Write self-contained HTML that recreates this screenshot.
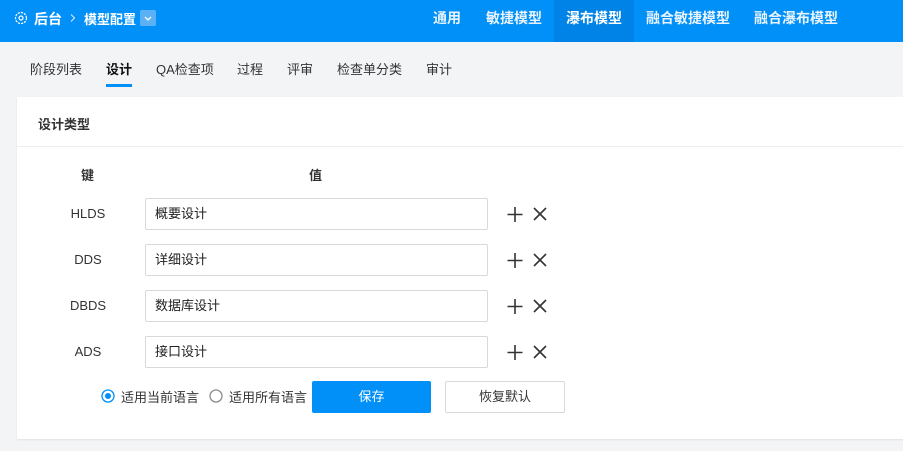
<!DOCTYPE html>
<html><head><meta charset="utf-8"><style>
*{margin:0;padding:0;box-sizing:border-box}
body{width:903px;height:451px;overflow:hidden;background:#f3f4f6;font-family:"Liberation Sans","Noto Sans CJK SC",sans-serif;font-size:13px;color:#333;position:relative}
.hdr{position:absolute;left:0;top:0;width:903px;height:42px;background:#0090f8;color:#fff}
.abs{position:absolute}
.tab{position:absolute;top:0;height:42px;line-height:36px;font-size:14px;font-weight:bold;color:#e8f3ff}
.sub{position:absolute;top:59px;font-size:13px;color:#333}
.card{position:absolute;left:17px;top:97px;width:900px;height:342px;background:#fff;box-shadow:0 1px 2px rgba(0,0,0,.08)}
.inp{position:absolute;left:145px;width:343px;height:32px;border:1px solid #d9d9d9;border-radius:2px;padding-left:9px;line-height:30px;font-size:13px;color:#222}
.key{position:absolute;left:50px;width:76px;text-align:center;font-size:13px;color:#333}
</style></head><body>
<div class="hdr">
<svg class="abs" style="left:14px;top:11px" width="14" height="14" viewBox="0 0 14 14"><circle cx="7" cy="7" r="5.5" fill="none" stroke="#fff" stroke-width="1.2" stroke-dasharray="2.2 1"/><circle cx="7" cy="7" r="2" fill="none" stroke="#fff" stroke-width="1.2"/></svg>
<div class="abs" style="left:34px;top:9px;font-size:14px;font-weight:bold">后台</div>
<svg class="abs" style="left:69px;top:13px" width="8" height="10"><path d="M2 1.5l3.5 3.5L2 8.5" fill="none" stroke="#cfe6ff" stroke-width="1.2"/></svg>
<div class="abs" style="left:84px;top:9px;font-size:13px;font-weight:bold">模型配置</div>
<div class="abs" style="left:140px;top:10px;width:16px;height:16px;background:#5bb1f5;border-radius:2px"><svg width="16" height="16"><path d="M5 7l3 3 3-3" fill="none" stroke="#fff" stroke-width="1.3"/></svg></div>
<div class="tab" style="left:433px">通用</div>
<div class="tab" style="left:486px">敏捷模型</div>
<div class="abs" style="left:554px;top:0;width:80px;height:42px;background:#0083e6"></div>
<div class="tab" style="left:566px;color:#fff">瀑布模型</div>
<div class="tab" style="left:646px">融合敏捷模型</div>
<div class="tab" style="left:754px">融合瀑布模型</div>
</div>
<div class="sub" style="left:30px">阶段列表</div>
<div class="sub" style="left:106px;font-weight:bold;color:#111">设计</div>
<div class="abs" style="left:106px;top:84px;width:26px;height:3px;background:#0090f8"></div>
<div class="sub" style="left:156px">QA检查项</div>
<div class="sub" style="left:237px">过程</div>
<div class="sub" style="left:287px">评审</div>
<div class="sub" style="left:337px">检查单分类</div>
<div class="sub" style="left:426px">审计</div>
<div class="card">
<div class="abs" style="left:21px;top:17px;font-size:13px;font-weight:bold;color:#333">设计类型</div>
<div class="abs" style="left:0;top:49px;width:900px;height:1px;background:#eceff2"></div>
</div>
<div class="abs" style="left:81px;top:165px;font-weight:bold">键</div>
<div class="abs" style="left:309px;top:165px;font-weight:bold">值</div>

<div class="key" style="top:206px">HLDS</div><div class="inp" style="top:198px">概要设计</div>
<div class="key" style="top:252px">DDS</div><div class="inp" style="top:244px">详细设计</div>
<div class="key" style="top:298px">DBDS</div><div class="inp" style="top:290px">数据库设计</div>
<div class="key" style="top:344px">ADS</div><div class="inp" style="top:336px">接口设计</div>

<svg class="abs" style="left:506px;top:198px" width="50" height="170">
<g stroke="#333" stroke-width="1.6" fill="none">
<g id="r"><path d="M9 9v15M1.5 16.5h15M28 10l12 12M40 10l-12 12"/></g>
<use href="#r" y="46"/><use href="#r" y="92"/><use href="#r" y="138"/>
</g></svg>

<svg class="abs" style="left:101px;top:389px" width="14" height="14"><circle cx="7" cy="7" r="6" fill="#fff" stroke="#0090f8" stroke-width="1.3"/><circle cx="7" cy="7" r="3" fill="#0090f8"/></svg>
<div class="abs" style="left:121px;top:387px">适用当前语言</div>
<svg class="abs" style="left:209px;top:389px" width="14" height="14"><circle cx="7" cy="7" r="6" fill="#fff" stroke="#8a8a8a" stroke-width="1.3"/></svg>
<div class="abs" style="left:229px;top:387px">适用所有语言</div>
<div class="abs" style="left:312px;top:381px;width:119px;height:32px;background:#0090f8;border-radius:2px;color:#fff;text-align:center;line-height:32px">保存</div>
<div class="abs" style="left:445px;top:381px;width:120px;height:32px;border:1px solid #d9d9d9;border-radius:2px;text-align:center;line-height:30px;color:#333">恢复默认</div>
</body></html>
